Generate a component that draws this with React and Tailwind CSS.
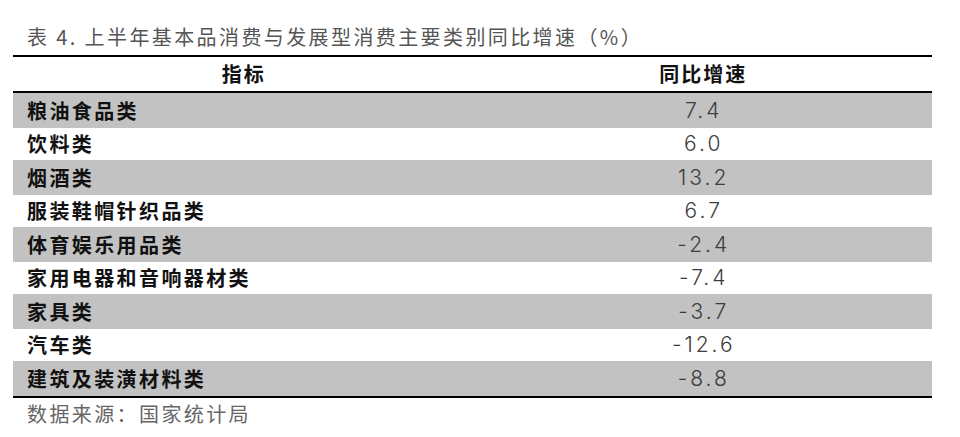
import React from 'react';

const rows = [
  { name: '粮油食品类', value: '7.4' },
  { name: '饮料类', value: '6.0' },
  { name: '烟酒类', value: '13.2' },
  { name: '服装鞋帽针织品类', value: '6.7' },
  { name: '体育娱乐用品类', value: '-2.4' },
  { name: '家用电器和音响器材类', value: '-7.4' },
  { name: '家具类', value: '-3.7' },
  { name: '汽车类', value: '-12.6' },
  { name: '建筑及装潢材料类', value: '-8.8' },
];

const cjk = { fontFamily: '"Noto Sans CJK SC", sans-serif' };
const num = { fontFamily: 'Inter, "Noto Sans CJK SC", sans-serif' };

const App = () => {
  return (
    <div className="w-[960px] h-[437px] bg-white" style={cjk}>
      {/* Title */}
      <div className="h-[55px] pl-[27px] pt-[24px] text-[20px] leading-[26px] tracking-[2.4px] text-[#555] whitespace-nowrap">
        表 4. 上半年基本品消费与发展型消费主要类别同比增速（%）
      </div>

      {/* Table */}
      <div className="ml-[13px] w-[919px] border-t-2 border-b-2 border-black">
        <div className="grid grid-cols-2 h-[36px] border-b-2 border-black items-center text-[20px] font-bold text-[#111] tracking-[2px]">
          <div className="text-center pl-[2px]">指标</div>
          <div className="text-center pl-[2px]">同比增速</div>
        </div>

        {rows.map((row, i) => {
          const shaded = i % 2 === 0;
          return (
            <div
              key={row.name}
              className={`grid grid-cols-2 items-center ${shaded ? 'bg-[#c2c2c2] h-[35px]' : 'bg-white h-[32px]'}`}
            >
              <div className="pl-[14px] text-[20px] leading-[24px] font-bold text-[#111] tracking-[2.4px] whitespace-nowrap">
                {row.name}
              </div>
              <div
                className="text-center pl-[3px] text-[21px] leading-[24px] font-light text-[#3c3c3c] tracking-[3px]"
                style={num}
              >
                {row.value}
              </div>
            </div>
          );
        })}
      </div>

      {/* Source */}
      <div className="pl-[27px] pt-[3px] text-[20px] leading-[26px] tracking-[2.4px] text-[#666]">
        数据来源：国家统计局
      </div>
    </div>
  );
};

export default App;
